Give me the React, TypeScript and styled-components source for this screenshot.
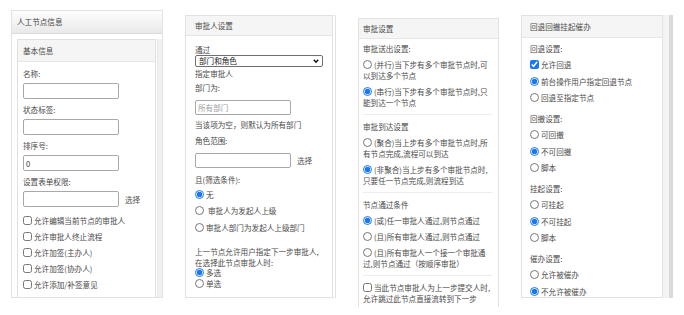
import React from 'react'
import styled, { createGlobalStyle } from 'styled-components'

const GlobalStyle = createGlobalStyle`
  html, body {
    margin: 0;
    padding: 0;
    background: #fff;
  }
  body {
    width: 684px;
    height: 315px;
    overflow: hidden;
    font-family: "Noto Sans CJK SC", "Noto Sans", sans-serif;
    color: #4a4a4a;
  }
`

const Page = styled.div`
  display: flex;
  align-items: flex-start;
  gap: 22px;
  padding-left: 11px;
  height: 315px;
  font-size: 7.6px;
  line-height: 11px;
`

const Panel = styled.div<{ $top: number; $width: number; $height: number; $open?: boolean }>`
  box-sizing: border-box;
  margin-top: ${p => p.$top}px;
  width: ${p => p.$width}px;
  height: ${p => p.$height}px;
  border: 1px solid #e2e2e2;
  border-bottom: ${p => (p.$open ? 'none' : '1px solid #e2e2e2')};
  background: #fff;
  display: flex;
  flex-direction: column;
  overflow: hidden;
  flex-shrink: 0;
`

// panel 2 has a thin double edge on the right
const EdgedPanel = styled(Panel)`
  border-right: 4px double #e2e2e2;
`

const Frame = styled.div<{ $top: number; $height: number }>`
  display: flex;
  margin-top: ${p => p.$top}px;
  height: ${p => p.$height}px;
  flex-shrink: 0;
`

const Track = styled.div<{ $width: number }>`
  width: ${p => p.$width}px;
  display: flex;
  justify-content: flex-end;
  background: #f3f3f3;
`

const Thumb = styled.div`
  width: 4px;
  background: #dadada;
`

const GradientHeader = styled.div`
  height: 22px;
  line-height: 22px;
  padding-left: 5px;
  border-bottom: 1px solid #dcdcdc;
  background: linear-gradient(#fefefe, #e9e9e9);
  color: #444;
  flex-shrink: 0;
`

const Header = styled.div<{ $h: number; $pad: number }>`
  height: ${p => p.$h}px;
  line-height: ${p => p.$h}px;
  padding-left: ${p => p.$pad}px;
  border-bottom: 1px solid #e6e6e6;
  background: #f5f5f5;
  color: #4a4a4a;
  flex-shrink: 0;
`

const Body = styled.div<{ $pad: string }>`
  padding: ${p => p.$pad};
  flex: 1;
`

/* ---------- panel 1 ---------- */

const CardArea = styled.div`
  display: flex;
  flex: 1;
  padding-top: 5px;
`

const Card = styled.div`
  margin-left: 5px;
  width: 140px;
  box-sizing: border-box;
  border: 1px solid #e0e0e0;
  border-bottom: none;
  display: flex;
  flex-direction: column;
`

const SideTrack = styled.div`
  margin-left: 1px;
  width: 4px;
  background: #f1f1f1;
  border-left: 1px solid #e9e9e9;
`

const Field = styled.div`
  margin-bottom: 5px;
`

const FieldLabel = styled.div`
  line-height: 12px;
  margin-bottom: 3px;
`

const InputRow = styled.div`
  display: flex;
  align-items: center;
  gap: 6px;
`

const TextInput = styled.input<{ $w: number; $h: number }>`
  box-sizing: border-box;
  width: ${p => p.$w}px;
  height: ${p => p.$h}px;
  margin: 0;
  padding: 0 2px;
  border: 1px solid #a8a8a8;
  border-radius: 2px;
  font: inherit;
  font-size: 7.6px;
  color: #333;
  background: #fff;
  &::placeholder {
    color: #a0a0a0;
  }
`

const Link = styled.span`
  color: #555;
`

const OptionRow = styled.label<{ $h: number }>`
  display: flex;
  align-items: center;
  height: ${p => p.$h}px;
  white-space: nowrap;
`

const Check = styled.input.attrs({ type: 'checkbox' })`
  width: 9px;
  height: 9px;
  margin: 0 2px 0 0;
  flex-shrink: 0;
  accent-color: #1877f2;
`

const Radio = styled.input.attrs({ type: 'radio' })`
  width: 9px;
  height: 9px;
  margin: 0 2px 0 0;
  flex-shrink: 0;
  accent-color: #1877f2;
`

/* ---------- panel 2 ---------- */

const Line = styled.div<{ $mt: number }>`
  margin-top: ${p => p.$mt}px;
  white-space: nowrap;
`

const Block = styled.div<{ $mt: number }>`
  margin-top: ${p => p.$mt}px;
`

const SelectWrap = styled.div`
  position: relative;
  width: 128px;
  height: 12px;
`

const Select = styled.select`
  appearance: none;
  box-sizing: border-box;
  width: 100%;
  height: 12px;
  margin: 0;
  padding: 0 0 0 3px;
  border: 1px solid #6f6f6f;
  border-radius: 2px;
  background: #fff;
  font: inherit;
  font-size: 7.6px;
  line-height: 10px;
  color: #222;
`

const Chevron = styled.svg`
  position: absolute;
  right: 4px;
  top: 3px;
  width: 6px;
  height: 6px;
  pointer-events: none;
`

const Gap = styled.span`
  display: inline-block;
  width: 2px;
`

/* ---------- panel 3 ---------- */

const Title = styled.div<{ $mt: number }>`
  margin-top: ${p => p.$mt}px;
  white-space: nowrap;
`

const WrapOption = styled.label`
  display: block;
  margin-top: 5px;
  white-space: nowrap;
  & > input {
    vertical-align: -1px;
  }
`

const Rule = styled.div`
  height: 1px;
  margin: 6px 0;
  background: #ececec;
`

/* ---------- panel 4 ---------- */

const Section = styled.div`
  margin-top: 7.25px;
  &:first-child {
    margin-top: 5px;
  }
`

const SectionTitle = styled.div`
  margin-bottom: 2.25px;
`

const permissions = [
  '允许编辑当前节点的审批人',
  '允许审批人终止流程',
  '允许加签(主办人)',
  '允许加签(协办人)',
  '允许添加/补签意见',
]

type Choice = { text: string; on?: boolean; kind?: 'radio' | 'check' }

const rollback: { title: string; items: Choice[] }[] = [
  {
    title: '回退设置:',
    items: [
      { text: '允许回退', on: true, kind: 'check' },
      { text: '前台操作用户指定回退节点', on: true },
      { text: '回退至指定节点' },
    ],
  },
  {
    title: '回撤设置:',
    items: [{ text: '可回撤' }, { text: '不可回撤', on: true }, { text: '脚本' }],
  },
  {
    title: '挂起设置:',
    items: [{ text: '可挂起' }, { text: '不可挂起', on: true }, { text: '脚本' }],
  },
  {
    title: '催办设置:',
    items: [{ text: '允许被催办' }, { text: '不允许被催办', on: true }],
  },
]

const App: React.FC = () => {
  return (
    <>
      <GlobalStyle />
      <Page>
        {/* 人工节点信息 */}
        <Panel $top={10} $width={152} $height={288}>
          <GradientHeader>人工节点信息</GradientHeader>
          <CardArea>
            <Card>
              <Header $h={21} $pad={5}>基本信息</Header>
              <Body $pad="6px 0 0 5px">
                <Field>
                  <FieldLabel>名称:</FieldLabel>
                  <TextInput $w={96} $h={16} />
                </Field>
                <Field>
                  <FieldLabel>状态标签:</FieldLabel>
                  <TextInput $w={96} $h={16} />
                </Field>
                <Field>
                  <FieldLabel>排序号:</FieldLabel>
                  <TextInput $w={96} $h={16} defaultValue="0" />
                </Field>
                <Field>
                  <FieldLabel>设置表单权限:</FieldLabel>
                  <InputRow>
                    <TextInput $w={96} $h={16} />
                    <Link>选择</Link>
                  </InputRow>
                </Field>
                {permissions.map(p => (
                  <OptionRow key={p} $h={16}>
                    <Check />
                    {p}
                  </OptionRow>
                ))}
              </Body>
            </Card>
            <SideTrack />
          </CardArea>
        </Panel>

        {/* 审批人设置 */}
        <EdgedPanel $top={15} $width={151} $height={283}>
          <Header $h={19} $pad={9}>审批人设置</Header>
          <Body $pad="0 0 0 9px">
            <Line $mt={8}>通过</Line>
            <SelectWrap>
              <Select defaultValue="dept">
                <option value="dept">部门和角色</option>
                <option value="user">用户</option>
              </Select>
              <Chevron viewBox="0 0 6 6">
                <path d="M0.8 1.8 L3 4.2 L5.2 1.8" fill="none" stroke="#111" strokeWidth="1.4" />
              </Chevron>
            </SelectWrap>
            <Line $mt={1}>指定审批人</Line>
            <Line $mt={3}>部门为:</Line>
            <Block $mt={7}>
              <TextInput $w={96} $h={15} placeholder="所有部门" />
            </Block>
            <Line $mt={4}>当该项为空，则默认为所有部门</Line>
            <Line $mt={5}>角色范围:</Line>
            <Block $mt={7}>
              <InputRow>
                <TextInput $w={96} $h={15} />
                <Link>选择</Link>
              </InputRow>
            </Block>
            <Line $mt={6}>且(筛选条件):</Line>
            <Block $mt={1}>
              <OptionRow $h={16.5}>
                <Radio defaultChecked />无
              </OptionRow>
              <OptionRow $h={16.5}>
                <Radio />
                <Gap />审批人为发起人上级
              </OptionRow>
              <OptionRow $h={16.5}>
                <Radio />审批人部门为发起人上级部门
              </OptionRow>
            </Block>
            <Line $mt={10}>上一节点允许用户指定下一步审批人,</Line>
            <Line $mt={0}>在选择此节点审批人时:</Line>
            <OptionRow $h={10.5}>
              <Radio defaultChecked />多选
            </OptionRow>
            <OptionRow $h={10.5}>
              <Radio />单选
            </OptionRow>
          </Body>
        </EdgedPanel>

        {/* 审批设置 */}
        <Panel $top={18} $width={141} $height={289} $open>
          <Header $h={19} $pad={4}>审批设置</Header>
          <Body $pad="0 6px 0 4px">
            <Title $mt={4}>审批送出设置:</Title>
            <WrapOption>
              <Radio />(并行)当下步有多个审批节点时,可
              <br />
              以到达多个节点
            </WrapOption>
            <WrapOption>
              <Radio defaultChecked />(串行)当下步有多个审批节点时,只
              <br />
              能到达一个节点
            </WrapOption>
            <Rule />
            <Title $mt={0}>审批到达设置</Title>
            <WrapOption>
              <Radio />(聚合)当上步有多个审批节点时,所
              <br />
              有节点完成,流程可以到达
            </WrapOption>
            <WrapOption>
              <Radio defaultChecked />(非聚合)当上步有多个审批节点时,
              <br />
              只要任一节点完成,则流程到达
            </WrapOption>
            <Rule />
            <Title $mt={0}>节点通过条件</Title>
            <WrapOption>
              <Radio defaultChecked />(或)任一审批人通过,则节点通过
            </WrapOption>
            <WrapOption>
              <Radio />(且)所有审批人通过,则节点通过
            </WrapOption>
            <WrapOption>
              <Radio />(且)所有审批人一个接一个审批通
              <br />
              过,则节点通过（按顺序审批）
            </WrapOption>
            <Rule />
            <WrapOption>
              <Check />当此节点审批人为上一步提交人时,
              <br />
              允许跳过此节点直接流转到下一步
            </WrapOption>
          </Body>
        </Panel>

        {/* 回退回撤挂起催办 */}
        <Frame $top={15} $height={283}>
          <Panel $top={0} $width={142} $height={283}>
            <Header $h={21} $pad={8}>回退回撤挂起催办</Header>
            <Body $pad="0 0 0 8px">
              {rollback.map(s => (
                <Section key={s.title}>
                  <SectionTitle>{s.title}</SectionTitle>
                  {s.items.map(it => (
                    <OptionRow key={it.text} $h={16.5}>
                      {it.kind === 'check' ? (
                        <Check defaultChecked={it.on} />
                      ) : (
                        <Radio defaultChecked={it.on} />
                      )}
                      {it.text}
                    </OptionRow>
                  ))}
                </Section>
              ))}
            </Body>
          </Panel>
          <Track $width={10}>
            <Thumb />
          </Track>
        </Frame>
      </Page>
    </>
  )
}

export default App
